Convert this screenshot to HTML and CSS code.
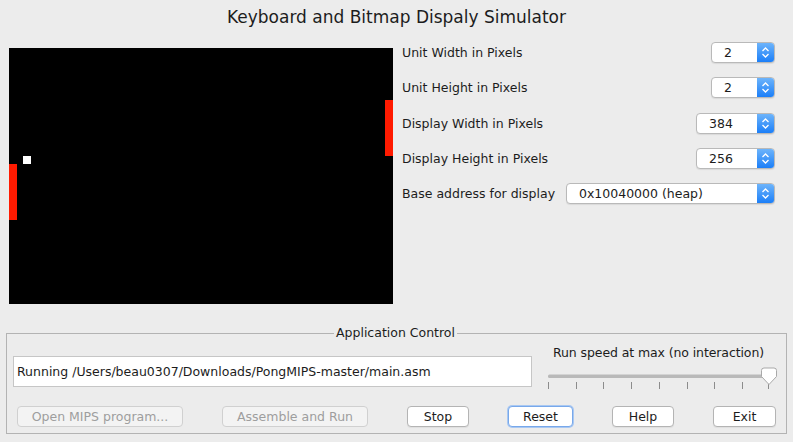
FILE: index.html
```html
<!DOCTYPE html>
<html lang="en">
<head>
  <meta charset="UTF-8">
  <title>Keyboard and Bitmap Display Simulator</title>
  <link rel="stylesheet" href="styles.css">
</head>
<body>
  <h1 class="title">Keyboard and Bitmap Dispaly Simulator</h1>
  <div class="main">
    <svg class="display" width="384" height="256" viewBox="0 0 384 256">
      <rect width="384" height="256" fill="#000"/>
      <rect x="0" y="116" width="8" height="56" fill="#ff1a00"/>
      <rect x="14" y="108" width="8" height="8" fill="#fff"/>
      <rect x="376" y="52" width="8" height="56" fill="#ff1a00"/>
    </svg>
    <div class="settings">
      <div class="row">
        <span>Unit Width in Pixels</span>
        <div class="select narrow"><span class="value">2</span><span class="arrows"><svg width="9" height="13" viewBox="0 0 9 13"><path d="M1.5 5 L4.5 2 L7.5 5 M1.5 8 L4.5 11 L7.5 8" fill="none" stroke="#fff" stroke-width="1.3"/></svg></span></div>
      </div>
      <div class="row">
        <span>Unit Height in Pixels</span>
        <div class="select narrow"><span class="value">2</span><span class="arrows"><svg width="9" height="13" viewBox="0 0 9 13"><path d="M1.5 5 L4.5 2 L7.5 5 M1.5 8 L4.5 11 L7.5 8" fill="none" stroke="#fff" stroke-width="1.3"/></svg></span></div>
      </div>
      <div class="row">
        <span>Display Width in Pixels</span>
        <div class="select medium"><span class="value">384</span><span class="arrows"><svg width="9" height="13" viewBox="0 0 9 13"><path d="M1.5 5 L4.5 2 L7.5 5 M1.5 8 L4.5 11 L7.5 8" fill="none" stroke="#fff" stroke-width="1.3"/></svg></span></div>
      </div>
      <div class="row">
        <span>Display Height in Pixels</span>
        <div class="select medium"><span class="value">256</span><span class="arrows"><svg width="9" height="13" viewBox="0 0 9 13"><path d="M1.5 5 L4.5 2 L7.5 5 M1.5 8 L4.5 11 L7.5 8" fill="none" stroke="#fff" stroke-width="1.3"/></svg></span></div>
      </div>
      <div class="row">
        <span>Base address for display</span>
        <div class="select wide"><span class="value">0x10040000 (heap)</span><span class="arrows"><svg width="9" height="13" viewBox="0 0 9 13"><path d="M1.5 5 L4.5 2 L7.5 5 M1.5 8 L4.5 11 L7.5 8" fill="none" stroke="#fff" stroke-width="1.3"/></svg></span></div>
      </div>
    </div>
  </div>

  <fieldset class="control">
    <legend>Application Control</legend>
    <div class="control-top">
      <div class="status">Running /Users/beau0307/Downloads/PongMIPS-master/main.asm</div>
      <div class="speed">
        <div class="speed-label">Run speed at max (no interaction)</div>
        <svg class="slider" width="230" height="25" viewBox="0 0 230 25">
          <rect x="0" y="8.5" width="222" height="3.5" rx="1.5" fill="#b9b9b9"/>
          <g stroke="#8c8c8c" stroke-width="1">
            <line x1="0.5" y1="16" x2="0.5" y2="23"/>
            <line x1="28.5" y1="16" x2="28.5" y2="23"/>
            <line x1="55.5" y1="16" x2="55.5" y2="23"/>
            <line x1="83.5" y1="16" x2="83.5" y2="23"/>
            <line x1="111.5" y1="16" x2="111.5" y2="23"/>
            <line x1="139.5" y1="16" x2="139.5" y2="23"/>
            <line x1="166.5" y1="16" x2="166.5" y2="23"/>
            <line x1="194.5" y1="16" x2="194.5" y2="23"/>
            <line x1="220.5" y1="16" x2="220.5" y2="23"/>
          </g>
          <path d="M213.5 4.5 q0 -2.5 2.5 -2.5 h10 q2.5 0 2.5 2.5 v6 l-7.5 8 l-7.5 -8 z" fill="#fff" stroke="#a9a9a9" stroke-width="1"/>
        </svg>
      </div>
    </div>
    <div class="buttons">
      <button class="btn open" disabled>Open MIPS program...</button>
      <button class="btn assemble" disabled>Assemble and Run</button>
      <button class="btn stop">Stop</button>
      <button class="btn reset focused">Reset</button>
      <button class="btn help">Help</button>
      <button class="btn exit">Exit</button>
    </div>
  </fieldset>
</body>
</html>
```

FILE: styles.css
```css
body {
  margin: 0;
  width: 793px;
  height: 442px;
  overflow: hidden;
  background-color: #ececec;
  color: #1c1c1c;
  font-family: "DejaVu Sans", sans-serif;
  font-size: 12.5px;
}
.title {
  margin: 0;
  height: 34px;
  line-height: 34px;
  font-size: 17px;
  font-weight: normal;
  text-align: center;
}
.main {
  display: flex;
  align-items: flex-start;
  padding-left: 9px;
}
.display {
  display: block;
  margin-top: 14px;
}
.settings {
  width: 373px;
  margin-top: 1px;
  margin-left: 9px;
}
.row {
  display: flex;
  align-items: center;
  justify-content: space-between;
  height: 35.25px;
}
.select {
  display: flex;
  height: 21px;
  box-sizing: border-box;
  border: 1px solid #b9b9b9;
  border-radius: 4px;
  background: #fff;
  overflow: hidden;
  box-shadow: 0 1px 1px rgba(0, 0, 0, 0.08);
}
.select.narrow { width: 64px; }
.select.medium { width: 79px; }
.select.wide { width: 209px; }
.select .value {
  flex: 1;
  padding-left: 12px;
  line-height: 19px;
}
.select .arrows {
  display: flex;
  align-items: center;
  justify-content: center;
  width: 17px;
  background: linear-gradient(#6db4fb, #1c7ff8);
}
.control {
  margin: 21px 6px 0 6px;
  padding: 4px 8px 6px 6px;
  border: 1px solid #b3b3b3;
}
.control legend {
  margin: 0 auto;
  padding: 0 2px;
  line-height: 16px;
}
.control-top {
  display: flex;
  align-items: flex-start;
}
.status {
  width: 519px;
  height: 31px;
  box-sizing: border-box;
  margin-top: 11px;
  padding-left: 3px;
  border: 1px solid #c6c6c6;
  background: #fff;
  line-height: 29px;
  white-space: nowrap;
}
.speed {
  margin-left: 16px;
  width: 230px;
}
.speed-label {
  padding-left: 5px;
  line-height: 16px;
  letter-spacing: -0.1px;
  white-space: nowrap;
}
.slider {
  display: block;
  margin-top: 5px;
}
.buttons {
  display: flex;
  gap: 39px;
  margin-top: 15px;
  padding-left: 4px;
}
.btn {
  height: 21px;
  padding: 0;
  border: 1px solid #b4b4b4;
  border-radius: 4px;
  background: #fff;
  color: #1c1c1c;
  font-family: inherit;
  font-size: 12.5px;
  box-shadow: 0 1px 1px rgba(0, 0, 0, 0.06);
}
.btn:disabled {
  background: #f3f3f3;
  border-color: #d0d0d0;
  color: #9e9e9e;
  box-shadow: none;
}
.btn.focused {
  border-color: #78a8ea;
  box-shadow: 0 0 0 1px #a9c8f2;
}
.open { width: 166px; }
.assemble { width: 146px; }
.stop { width: 62px; }
.reset { width: 65px; }
.help { width: 62px; }
.exit { width: 63px; }
```
